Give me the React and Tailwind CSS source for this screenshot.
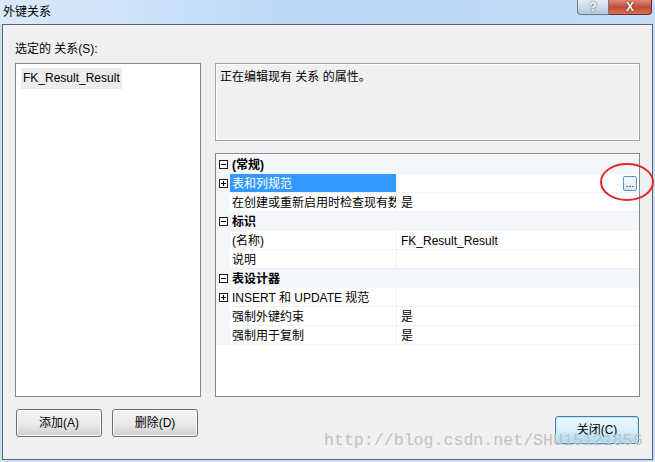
import React from 'react';

const font = { fontFamily: '"Liberation Sans", "Noto Sans CJK SC", sans-serif' };

const rows = [
  { type: 'head', label: '(常规)' },
  { type: 'prop', label: '表和列规范', value: '', expand: true, selected: true, ellipsis: true },
  { type: 'prop', label: '在创建或重新启用时检查现有数据', value: '是' },
  { type: 'head', label: '标识' },
  { type: 'prop', label: '(名称)', value: 'FK_Result_Result' },
  { type: 'prop', label: '说明', value: '' },
  { type: 'head', label: '表设计器' },
  { type: 'prop', label: 'INSERT 和 UPDATE 规范', value: '', expand: true },
  { type: 'prop', label: '强制外键约束', value: '是' },
  { type: 'prop', label: '强制用于复制', value: '是' },
];

const Box = ({ minus }) => (
  <div className="relative w-[9px] h-[9px] border border-[#1e1e1e] bg-white">
    <div className="absolute left-[1px] right-[1px] top-[3px] h-px bg-black" />
    {!minus && <div className="absolute top-[1px] bottom-[1px] left-[3px] w-px bg-black" />}
  </div>
);

const GridRow = ({ row }) => {
  if (row.type === 'head') {
    return (
      <div className="flex h-[19px] bg-[#f3f6fb]">
        <div className="w-[14px] flex items-center justify-center">
          <Box minus />
        </div>
        <div className="pl-[2px] pt-[1px] flex items-center font-bold text-[12px] text-black">{row.label}</div>
      </div>
    );
  }
  return (
    <div className="flex h-[19px]">
      <div className="w-[14px] bg-[#f3f6fb] flex items-center justify-center">
        {row.expand && <Box />}
      </div>
      <div
        className={`w-[167px] pl-[2px] pt-[1px] flex items-center overflow-hidden whitespace-nowrap text-[12px] border-b border-r border-[#f0f0f0] ${
          row.selected ? 'bg-[#3399ff] text-white' : 'bg-white text-black'
        }`}
      >
        {row.label}
      </div>
      <div className="flex-1 relative pl-[4px] pt-[1px] flex items-center bg-white border-b border-[#f0f0f0] text-[12px] text-black">
        {row.value}
        {row.ellipsis && (
          <div className="absolute right-[2px] top-[2px] w-[14px] h-[15px] rounded-[2px] border border-[#5b8fc7] bg-gradient-to-b from-[#f4f9fe] to-[#dbe9f7] flex items-end justify-center text-[10px] leading-[10px] pb-[1px]">
            ...
          </div>
        )}
      </div>
    </div>
  );
};

const Btn = ({ children, primary }) => (
  <div
    className={`h-[28px] flex items-center justify-center rounded-[3px] text-[12px] text-black border ${
      primary
        ? 'w-[84px] border-[#3c7fb1] bg-gradient-to-b from-[#eaf6fd] via-[#d9f0fc] to-[#a7d9f5] shadow-[inset_0_0_0_1px_#c5ecfd]'
        : 'w-[86px] border-[#707070] bg-gradient-to-b from-[#f2f2f2] via-[#ebebeb] to-[#cfcfcf] shadow-[inset_0_0_0_1px_#fcfcfc]'
    }`}
  >
    {children}
  </div>
);

export default function App() {
  return (
    <div className="w-[655px] h-[462px] bg-[#cddff3] relative overflow-hidden" style={font}>
      {/* title bar */}
      <div className="h-[24px] flex items-start bg-gradient-to-r from-[#dbe9f9] via-[#b9d7f7] to-[#c6ddf5]">
        <div className="pl-[3px] pt-[4px] text-[12px] leading-[16px] text-black">外键关系</div>
        <div className="ml-auto mr-[3px] flex">
          <div className="w-[32px] h-[15px] rounded-bl-[4px] border border-t-0 border-[#6a7b8f] bg-gradient-to-b from-[#e4ecf5] to-[#b6c6d8] flex items-center justify-center text-[12px] font-bold text-white leading-none" style={{ textShadow: '0 0 2px #333' }}>
            ?
          </div>
          <div className="w-[43px] h-[15px] rounded-br-[4px] border border-l-0 border-t-0 border-[#6b2d24] bg-gradient-to-b from-[#d88b79] via-[#c44a36] to-[#d4704f] flex items-center justify-center text-[12px] font-bold text-white leading-none" style={{ textShadow: '0 0 2px #400' }}>
            X
          </div>
        </div>
      </div>

      {/* client area */}
      <div className="mx-[2px] h-[436px] border border-[#566473] bg-[#f0f0f0] px-[12px] pt-[16px]">
        <div className="flex gap-[14px]">
          <div className="w-[186px] flex flex-col">
            <div className="h-[16px] mb-[6px] text-[12px] leading-[16px] text-black">选定的 关系(S):</div>
            <div className="h-[334px] border border-[#828790] bg-white pt-[1px] pl-[5px]">
              <div className="inline-block h-[21px] px-[2px] bg-[#ececec] text-[12px] leading-[21px] text-black">FK_Result_Result</div>
            </div>
          </div>
          <div className="flex-1 flex flex-col pt-[22px]">
            <div className="h-[78px] border border-[#a0a0a0] shadow-[inset_0_0_0_1px_#ffffff] bg-[#f0f0f0] px-[4px] pt-[5px] text-[12px] leading-[16px] text-black">
              正在编辑现有 关系 的属性。
            </div>
            <div className="mt-[12px] h-[244px] border border-[#828790] bg-white pt-[1px]">
              {rows.map((r, i) => (
                <GridRow key={i} row={r} />
              ))}
            </div>
          </div>
        </div>

        <div className="flex items-start mt-[12px]">
          <div className="flex gap-[10px] pl-[1px]">
            <Btn>添加(A)</Btn>
            <Btn>删除(D)</Btn>
          </div>
          <div className="ml-auto mt-[7px] mr-[1px]">
            <Btn primary>关闭(C)</Btn>
          </div>
        </div>
      </div>

      {/* callout circle */}
      <svg className="absolute left-[598px] top-[161px]" width="58" height="42" viewBox="0 0 58 42">
        <ellipse cx="29" cy="21" rx="26" ry="18" fill="none" stroke="#e8262a" strokeWidth="2" />
      </svg>

      {/* watermark */}
      <div
        className="absolute left-[324px] top-[431px] text-[16.6px] leading-[20px] text-[#c2c2c2] whitespace-nowrap pointer-events-none"
        style={{ fontFamily: '"Liberation Mono", monospace' }}
      >
        http://blog.csdn.net/SHU15121856
      </div>
    </div>
  );
}
